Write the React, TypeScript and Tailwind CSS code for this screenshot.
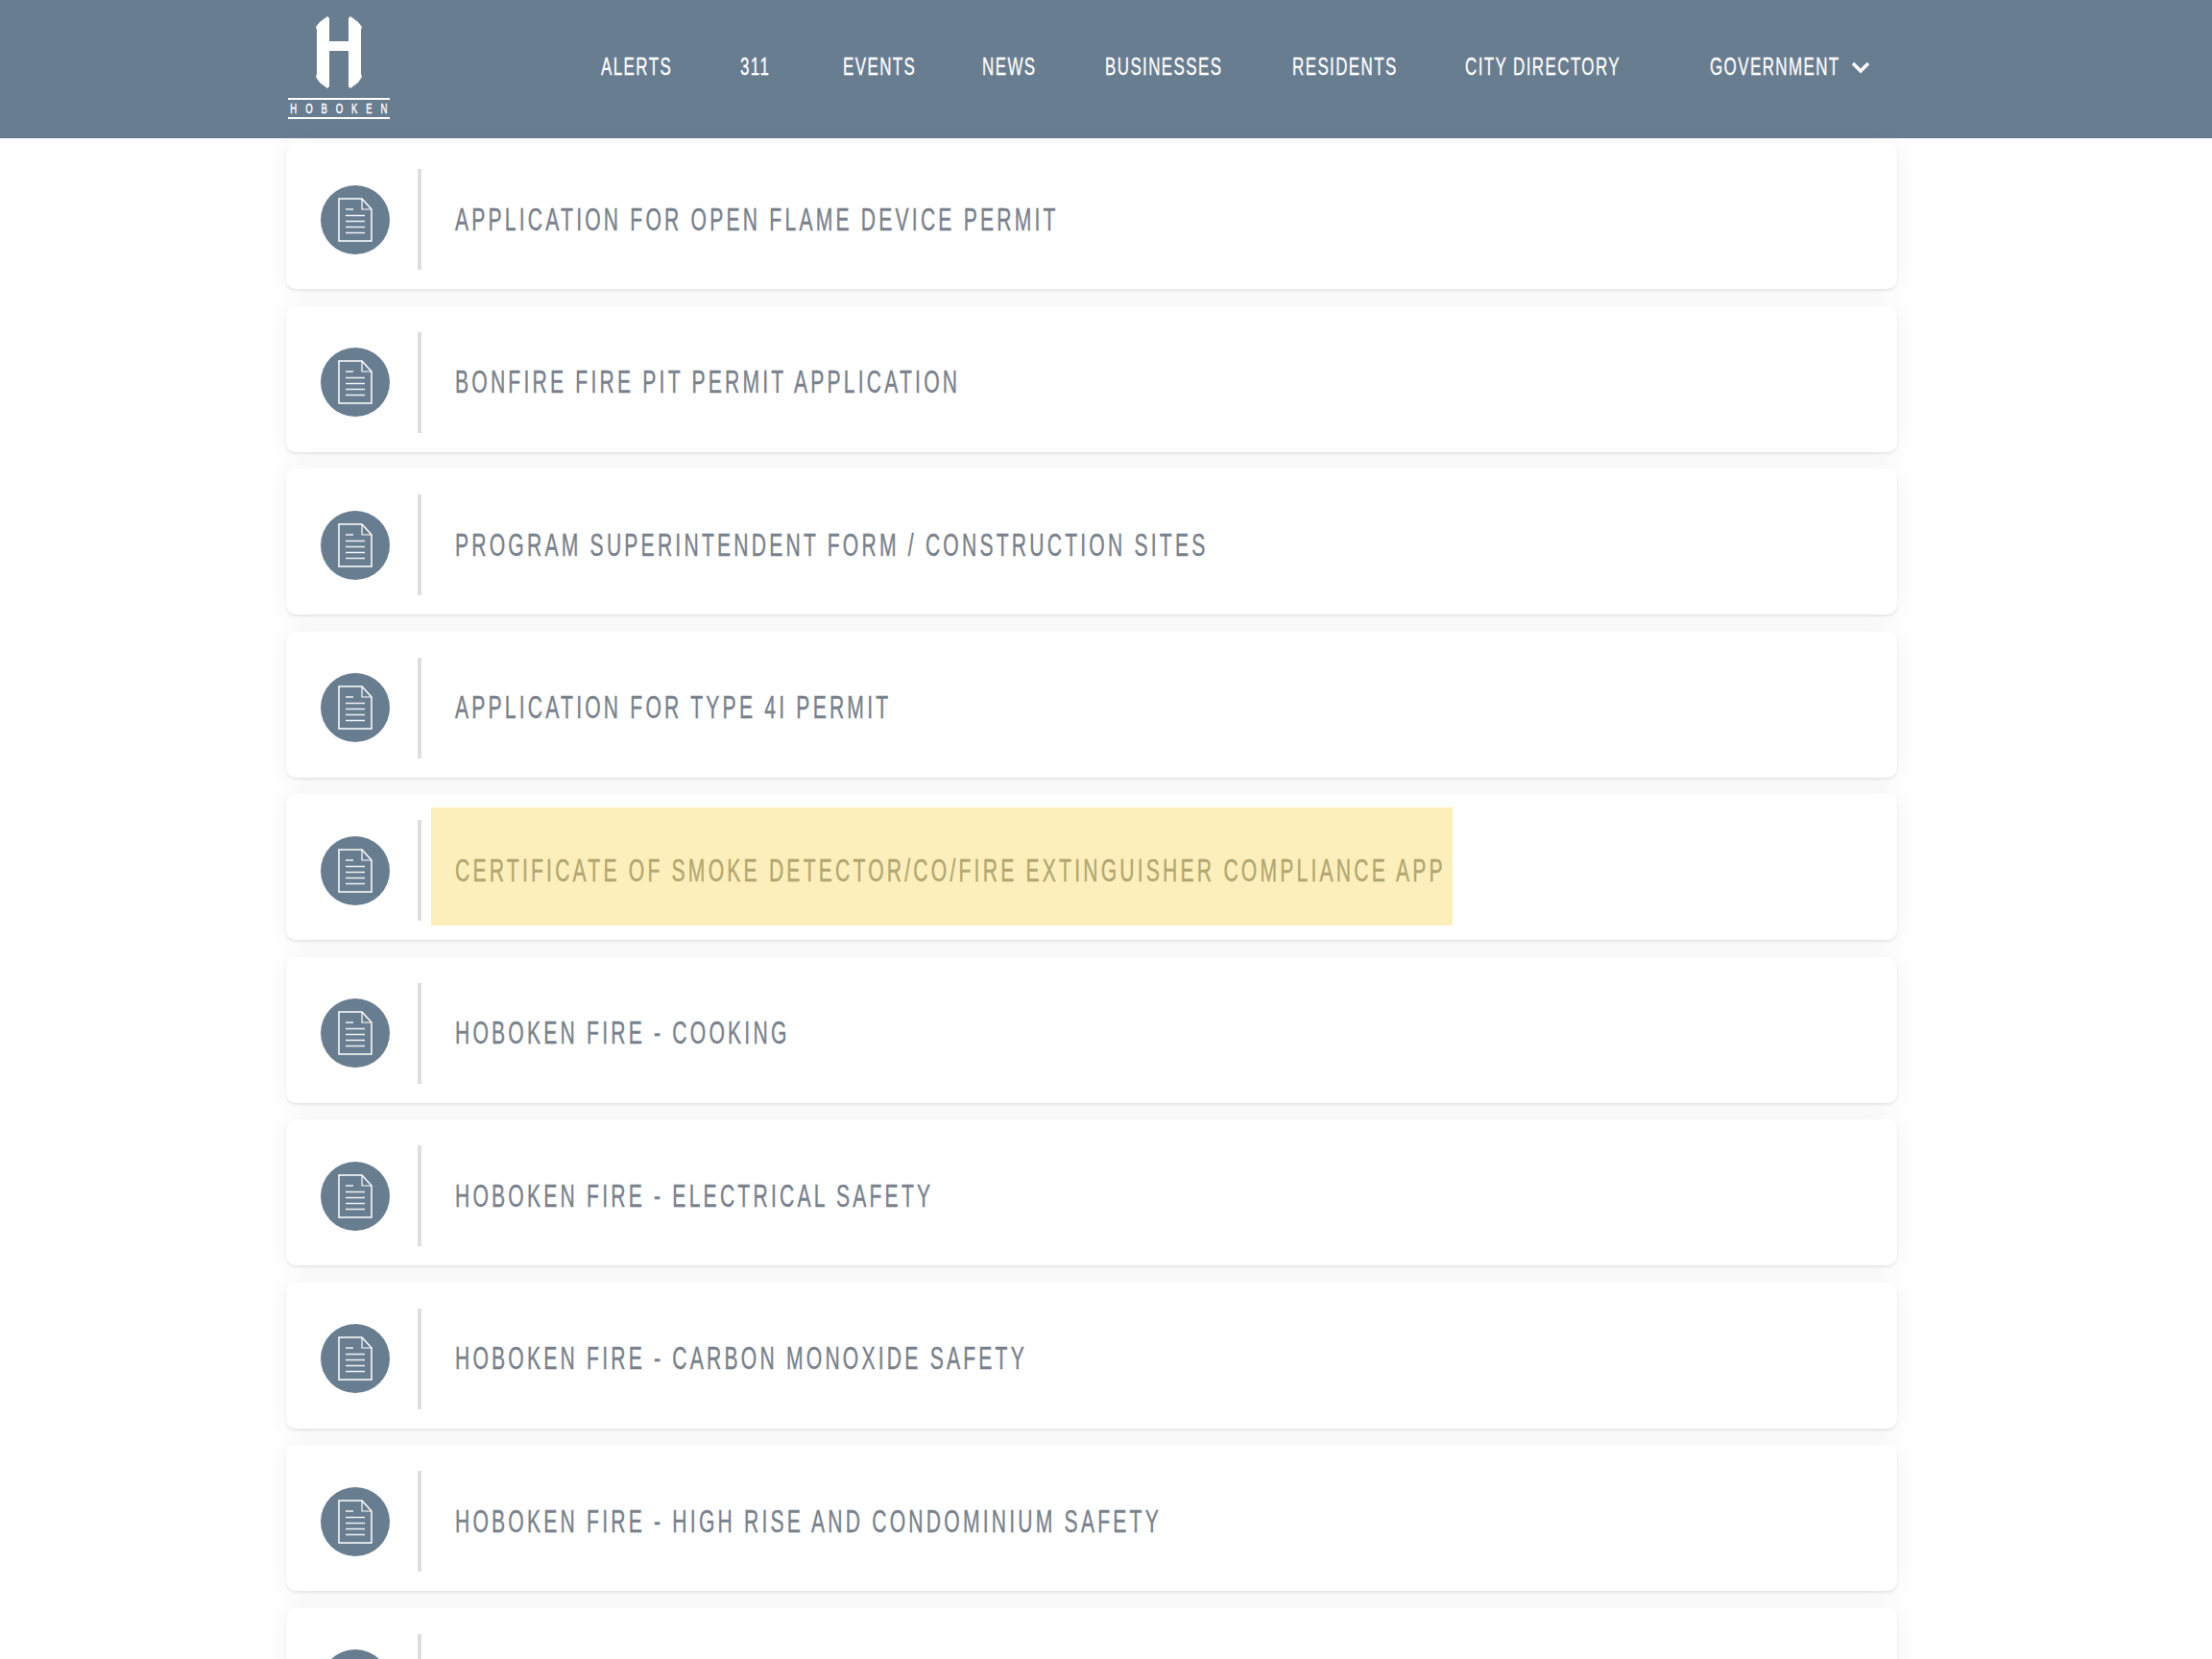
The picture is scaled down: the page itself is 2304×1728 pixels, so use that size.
const NAV = [
  { label: "ALERTS", cls: "w-[73px]" },
  { label: "311", cls: "w-[35px]" },
  { label: "EVENTS", cls: "w-[73px]" },
  { label: "NEWS", cls: "w-[56px]" },
  { label: "BUSINESSES", cls: "w-[123px]" },
  { label: "RESIDENTS", cls: "w-[108px]" },
  { label: "CITY DIRECTORY", cls: "w-[165px]" },
];

const ROWS = [
  "APPLICATION FOR OPEN FLAME DEVICE PERMIT",
  "BONFIRE FIRE PIT PERMIT APPLICATION",
  "PROGRAM SUPERINTENDENT FORM / CONSTRUCTION SITES",
  "APPLICATION FOR TYPE 4I PERMIT",
  "CERTIFICATE OF SMOKE DETECTOR/CO/FIRE EXTINGUISHER COMPLIANCE APP",
  "HOBOKEN FIRE - COOKING",
  "HOBOKEN FIRE - ELECTRICAL SAFETY",
  "HOBOKEN FIRE - CARBON MONOXIDE SAFETY",
  "HOBOKEN FIRE - HIGH RISE AND CONDOMINIUM SAFETY",
  "",
];

function Logo() {
  return (
    <div className="flex w-[106px] flex-col items-center">
      <svg width="48" height="75" viewBox="0 0 48 75" className="mb-[10px]" fill="#fff">
        <path d="M0 11 L4 6 L12 0 L14 2 L14 26 L34 26 L34 2 L36 0 L44 6 L48 11 L47 14 L47 60 L48 63 L44 69 L36 75 L34 73 L34 36 L14 36 L14 73 L12 75 L4 69 L0 63 L1 60 L1 14 Z" />
      </svg>
      <div className="flex h-[22px] w-full items-center justify-center border-y-2 border-white">
        <span className="origin-center scale-x-[0.64] pl-[14px] text-[15px] leading-none tracking-[13.8px] text-white [-webkit-text-stroke:0.4px_currentColor]">
          HOBOKEN
        </span>
      </div>
    </div>
  );
}

function DocIcon() {
  return (
    <div className="flex h-[72px] w-[72px] shrink-0 items-center justify-center rounded-full bg-[#697d91]">
      <svg width="36" height="46" viewBox="0 0 36 46" fill="none" stroke="#fff">
        <path d="M1 1 H25 L35 12 V45 H1 Z" strokeWidth="1.5" />
        <path d="M25 1 V12 H35" strokeWidth="1.2" />
        <path d="M8 12 H16 M8 18.500 H28 M8 24.500 H28 M8 30.500 H28 M8 36.500 H28" strokeWidth="1.4" opacity="0.9" />
      </svg>
    </div>
  );
}

function Row({ text }: { text: string }) {
  const highlighted = text.startsWith("CERTIFICATE");
  const label =
    "block origin-left scale-x-[0.64] whitespace-nowrap text-[33px] tracking-[5px] [-webkit-text-stroke:0.4px_currentColor]";
  return (
    <div className="flex h-[152px] shrink-0 items-center rounded-[10px] bg-white pl-[36px] shadow-[0_0_30px_rgba(0,0,0,0.05),0_2px_3px_rgba(0,0,0,0.08)]">
      <div className="flex shrink-0 items-center pt-[7px]">
        <DocIcon />
        <div className="ml-[29px] h-[105px] w-[4px] shrink-0 bg-[#dedede]" />
      </div>
      {highlighted ? (
        <div className="mb-[2px] ml-[10px] flex h-[123px] w-[1064px] items-center bg-[#fdefbb] pl-[25px] pt-[10px]">
          <span className={`${label} text-[#b2a771]`}>{text}</span>
        </div>
      ) : (
        <div className="ml-[35px] pt-[7px]">
          <span className={`${label} text-[#79818c]`}>{text}</span>
        </div>
      )}
    </div>
  );
}

export default function App() {
  return (
    <div className="flex h-screen flex-col overflow-hidden bg-white [font-family:'Liberation_Sans',sans-serif]">
      <header className="flex h-[144px] shrink-0 items-center bg-[#697d91] pl-[300px]">
        <div className="mb-[4px]">
          <Logo />
        </div>
        <nav className="ml-[220px] flex items-center gap-[72px] pb-[5px] text-[26.500px] tracking-[2.200px] text-white [-webkit-text-stroke:0.3px_currentColor]">
          {NAV.map((n) => (
            <div key={n.label} className={n.cls}>
              <span className="block origin-left scale-x-[0.64] whitespace-nowrap">{n.label}</span>
            </div>
          ))}
          <div className="ml-[18px] flex items-center">
            <div className="w-[133px]">
              <span className="block origin-left scale-x-[0.64] whitespace-nowrap">GOVERNMENT</span>
            </div>
            <svg width="20" height="14" viewBox="0 0 20 14" fill="none" stroke="#fff" strokeWidth="3.500" className="ml-[14px]">
              <path d="M2 3 L10 11 L18 3" />
            </svg>
          </div>
        </nav>
      </header>
      <main className="ml-[298px] flex w-[1678px] shrink-0 flex-col gap-[17.5px] self-start pt-[5px]">
        {ROWS.map((t, i) => (
          <Row key={i} text={t} />
        ))}
      </main>
    </div>
  );
}
